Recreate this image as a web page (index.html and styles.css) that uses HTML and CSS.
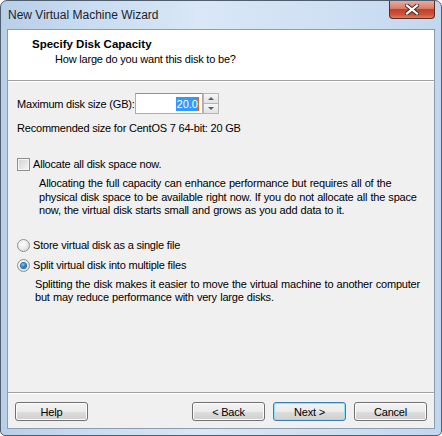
FILE: index.html
```html
<!DOCTYPE html>
<html lang="en">
<head>
  <meta charset="UTF-8">
  <title>New Virtual Machine Wizard</title>
  <link rel="stylesheet" href="styles.css">
</head>
<body>
  <div class="window">
    <div class="titlebar">
      <span class="title">New Virtual Machine Wizard</span>
      <div class="close-btn">
        <svg width="14" height="11" viewBox="0 0 14 11">
          <path d="M2 1.5 L12 9.5 M12 1.5 L2 9.5" stroke="#3a2a28" stroke-width="4" stroke-linecap="square"/>
          <path d="M2 1.5 L12 9.5 M12 1.5 L2 9.5" stroke="#ffffff" stroke-width="2.2" stroke-linecap="square"/>
        </svg>
      </div>
    </div>

    <div class="client">
      <div class="header">
        <div class="header-title">Specify Disk Capacity</div>
        <div class="header-sub">How large do you want this disk to be?</div>
      </div>

      <div class="content">
        <div class="size-row">
          <span class="size-label">Maximum disk size (GB):</span>
          <div class="spin-input">
            <span class="selected">20.0</span><span class="caret"></span>
          </div>
          <div class="spinner">
            <div class="spin-btn"><span class="arrow-up"></span></div>
            <div class="spin-btn"><span class="arrow-down"></span></div>
          </div>
        </div>
        <div class="recommend">Recommended size for CentOS 7 64-bit: 20 GB</div>

        <div class="option check-row">
          <span class="checkbox"></span>
          <span>Allocate all disk space now.</span>
        </div>
        <p class="desc desc-check">Allocating the full capacity can enhance performance but requires all of the<br>physical disk space to be available right now. If you do not allocate all the space<br>now, the virtual disk starts small and grows as you add data to it.</p>

        <div class="option radio-first">
          <span class="radio"></span>
          <span>Store virtual disk as a single file</span>
        </div>
        <div class="option radio-second">
          <span class="radio checked"></span>
          <span>Split virtual disk into multiple files</span>
        </div>
        <p class="desc desc-radio">Splitting the disk makes it easier to move the virtual machine to another computer<br>but may reduce performance with very large disks.</p>
      </div>

      <div class="footer">
        <button class="btn help">Help</button>
        <button class="btn">&lt; Back</button>
        <button class="btn default">Next &gt;</button>
        <button class="btn">Cancel</button>
      </div>
    </div>
  </div>
</body>
</html>
```

FILE: styles.css
```css
body {
  margin: 0;
  font-family: "Liberation Sans", Arial, sans-serif;
  font-size: 11px;
  letter-spacing: -0.2px;
  color: #000;
}

.window {
  width: 442px;
  height: 436px;
  box-sizing: border-box;
  border: 1px solid #4f5d6e;
  border-radius: 7px 7px 5px 5px;
  background: linear-gradient(to right, #b8cfe8 0%, #c9dcf1 20%, #d9e7f6 45%, #cfe0f3 75%, #c2d7ee 100%);
  padding: 0 6px 6px 6px;
  display: flex;
  flex-direction: column;
}

/* title bar */
.titlebar {
  height: 28px;
  display: flex;
  align-items: flex-start;
}
.title {
  font-size: 12px;
  letter-spacing: 0;
  line-height: 28px;
  padding-left: 1px;
  color: #1b2330;
}
.close-btn {
  margin-left: auto;
  width: 46px;
  height: 18px;
  box-sizing: border-box;
  border: 1px solid #5e2b23;
  border-top: none;
  border-radius: 0 0 4px 4px;
  background: linear-gradient(to bottom, #e9ab9d 0%, #d97a66 45%, #c3402b 50%, #cc5338 80%, #d9806a 100%);
  display: flex;
  align-items: center;
  justify-content: center;
}

/* client area */
.client {
  flex: 1;
  border: 1px solid #8c9db2;
  background: #f0f0f0;
  display: flex;
  flex-direction: column;
}

.header {
  background: #fff;
  height: 51px;
  box-sizing: border-box;
  padding-top: 8px;
  border-bottom: 1px solid #a0a0a0;
  box-shadow: 0 1px 0 #fff;
}
.header-title {
  font-weight: bold;
  font-size: 11.5px;
  letter-spacing: 0;
  line-height: 13px;
  padding-left: 24px;
}
.header-sub {
  line-height: 13px;
  margin-top: 2px;
  padding-left: 47px;
}

.content {
  flex: 1;
  padding: 0 9px;
}

.size-row {
  margin-top: 12px;
  display: flex;
  align-items: center;
  height: 21px;
}
.size-label {
  width: 118px;
}
.spin-input {
  width: 68px;
  height: 21px;
  box-sizing: border-box;
  border: 1px solid #abadb3;
  border-top-color: #8e9096;
  background: #fff;
  display: flex;
  align-items: center;
  justify-content: flex-end;
  padding-right: 3px;
  letter-spacing: 0;
}
.selected {
  background: #3399ff;
  color: #fff;
  line-height: 14px;
  padding-left: 1px;
}
.caret {
  width: 1px;
  height: 14px;
  background: #e0661a;
}
.spinner {
  width: 16px;
  height: 21px;
  display: flex;
  flex-direction: column;
}
.spin-btn {
  flex: 1;
  box-sizing: border-box;
  border: 1px solid #b5b5b5;
  background: linear-gradient(to bottom, #f6f6f6, #e2e2e2);
  display: flex;
  align-items: center;
  justify-content: center;
}
.spin-btn + .spin-btn {
  border-top: none;
}
.arrow-up {
  border-left: 3px solid transparent;
  border-right: 3px solid transparent;
  border-bottom: 3px solid #4c607a;
}
.arrow-down {
  border-left: 3px solid transparent;
  border-right: 3px solid transparent;
  border-top: 3px solid #4c607a;
}

.recommend {
  margin-top: 8px;
  line-height: 13px;
}

.option {
  display: flex;
  align-items: center;
  gap: 3px;
  height: 13px;
  line-height: 13px;
}
.check-row {
  margin-top: 23px;
}
.radio-first {
  margin-top: 21px;
}
.radio-second {
  margin-top: 7px;
}

.checkbox {
  width: 13px;
  height: 13px;
  box-sizing: border-box;
  border: 1px solid #8f8f8f;
  box-shadow: inset 0 0 0 1px #f4f4f4;
  background: linear-gradient(135deg, #d2d2d2, #f6f6f6);
}
.radio {
  width: 13px;
  height: 13px;
  box-sizing: border-box;
  border-radius: 50%;
  border: 1px solid #8e8f8f;
  background: radial-gradient(circle at 40% 35%, #ffffff 0%, #f2f2f2 35%, #cfcfcf 100%);
  display: flex;
  align-items: center;
  justify-content: center;
}
.radio.checked::after {
  content: "";
  width: 5px;
  height: 5px;
  border-radius: 50%;
  background: radial-gradient(circle at 40% 35%, #7dd0f6 0%, #1a6fb4 60%, #0c3f7a 100%);
  box-shadow: 0 0 0 1px #2a6ea8;
}

.desc {
  margin: 0;
  line-height: 13.5px;
  word-spacing: 0.4px;
}
.desc-check {
  margin-top: 6px;
  padding-left: 22px;
}
.desc-radio {
  margin-top: 6px;
  padding-left: 18px;
}

/* buttons */
.footer {
  display: flex;
  gap: 8px;
  padding: 9px 7px 7px 7px;
  border-top: 1px solid #a0a0a0;
  box-shadow: inset 0 1px 0 #fff;
}
.btn {
  width: 73px;
  height: 19px;
  padding: 0;
  font-family: "Liberation Sans", Arial, sans-serif;
  font-size: 11px;
  letter-spacing: -0.2px;
  color: #000;
  border: 1px solid #707070;
  border-radius: 3px;
  background: linear-gradient(to bottom, #f2f2f2 0%, #ebebeb 50%, #dddddd 51%, #cfcfcf 100%);
  box-shadow: inset 0 0 0 1px #fcfcfc;
}
.btn.help {
  margin-right: auto;
}
.btn.default {
  border-color: #3c7fb1;
  box-shadow: inset 0 0 0 1px #8ee1fa;
}
```
